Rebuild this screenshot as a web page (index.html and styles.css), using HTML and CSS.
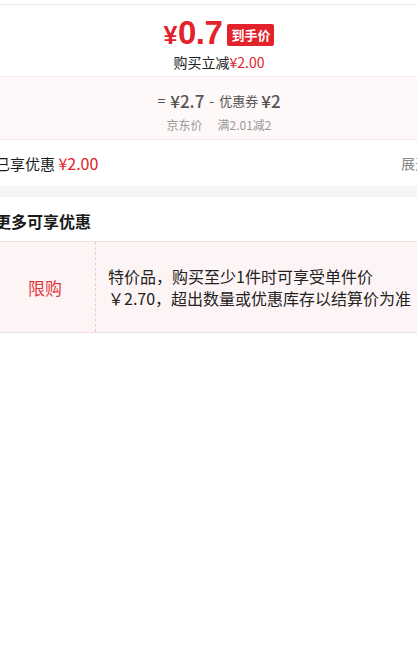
FILE: index.html
```html
<!DOCTYPE html>
<html lang="zh-CN">
<head>
    <meta charset="UTF-8">
    <meta name="viewport" content="width=device-width, initial-scale=1.0">
    <title>优惠明细</title>
    <link rel="stylesheet" href="styles.css">
</head>
<body>
    <div class="sheet">
        <!-- Final price -->
        <div class="price-head">
            <div class="price-line">
                <span class="price"><span class="yen">¥</span>0.7</span>
                <span class="badge">到手价</span>
            </div>
            <p class="saving">购买立减<span class="red">¥2.00</span></p>
        </div>

        <!-- Price formula -->
        <div class="formula">
            <div class="formula-row">
                <span class="op">=</span>
                <span class="amount">¥2.7</span>
                <span class="op">-</span>
                <span class="label">优惠券</span>
                <span class="amount">¥2</span>
            </div>
            <div class="formula-notes">
                <span>京东价</span>
                <span>满2.01减2</span>
            </div>
        </div>

        <div class="enjoyed">
            <span>已享优惠 <span class="red amount-red">¥2.00</span></span>
            <span class="toggle">展开</span>
        </div>

        <div class="gap"></div>

        <!-- More offers -->
        <h2 class="section-title">更多可享优惠</h2>
        <div class="offer">
            <div class="offer-tag">限购</div>
            <div class="offer-text">特价品，购买至少1件时可享受单件价<br>￥2.70，超出数量或优惠库存以结算价为准</div>
        </div>
    </div>
</body>
</html>
```

FILE: styles.css
```css
:root {
    --red: #e3222b;
    --text: #1a1a1a;
    --grey: #555555;
    --light: #999999;
    --pink-bg: #fff8f8;
    --line: #ececec;
}

* {
    margin: 0;
    padding: 0;
    box-sizing: border-box;
}

body {
    font-family: "Noto Sans CJK SC", "Liberation Sans", sans-serif;
    background: #ffffff;
    color: var(--text);
    overflow: hidden;
}

.sheet {
    width: 472px;
    margin-left: -17px;
}

.red {
    color: var(--red);
}

/* Final price */
.price-head {
    border-top: 1px solid #e8e6e6;
    margin-top: 4px;
    height: 72px;
    display: flex;
    flex-direction: column;
    align-items: center;
    padding-top: 9px;
}

.price-line {
    display: flex;
    align-items: center;
    gap: 5px;
    height: 38px;
}

.price {
    font-family: "Liberation Sans", sans-serif;
    font-size: 33px;
    font-weight: 700;
    color: var(--red);
    letter-spacing: -0.5px;
}

.yen {
    font-size: 25px;
    margin-right: 1px;
}

.badge {
    background: var(--red);
    color: #ffffff;
    font-size: 13px;
    font-weight: 700;
    line-height: 22px;
    padding: 0 4px;
    border-radius: 2px;
    margin-top: 4px;
}

.saving {
    font-size: 14px;
    line-height: 20px;
    color: #222222;
}

/* Price formula */
.formula {
    background: var(--pink-bg);
    border-top: 1px solid #f8eeee;
    border-bottom: 1px solid var(--line);
    height: 64px;
    display: flex;
    flex-direction: column;
    align-items: center;
    padding-top: 10px;
    color: var(--grey);
}

.formula-row {
    display: flex;
    align-items: center;
    gap: 5px;
    height: 26px;
}

.op {
    font-size: 14px;
}

.amount {
    font-size: 17px;
    font-weight: 500;
}

.label {
    font-size: 13px;
    margin-right: -2px;
}

.formula-notes {
    display: flex;
    gap: 15px;
    font-size: 12px;
    color: var(--light);
    line-height: 20px;
    margin-top: 2px;
}

.enjoyed {
    display: flex;
    justify-content: space-between;
    align-items: center;
    height: 46px;
    padding: 0 12px;
    font-size: 15px;
}

.amount-red {
    font-size: 16px;
}

.toggle {
    font-size: 14px;
    color: #888888;
    margin-right: 14px;
}

.gap {
    height: 11px;
    background: #f5f5f8;
}

/* More offers */
.section-title {
    font-size: 16px;
    font-weight: 700;
    line-height: 22px;
    padding: 13px 12px 9px;
}

.offer {
    display: flex;
    margin: 0 12px;
    background: #fdf5f5;
    border-top: 1px solid #f0dede;
    border-bottom: 1px solid #f0dede;
    height: 92px;
}

.offer-tag {
    width: 101px;
    flex-shrink: 0;
    display: flex;
    align-items: center;
    justify-content: center;
    color: #e4393c;
    font-size: 17px;
    border-right: 1px dashed #e8cfd2;
}

.offer-text {
    display: flex;
    align-items: center;
    padding-left: 12px;
    font-size: 16px;
    line-height: 22px;
    color: #222222;
}
```
